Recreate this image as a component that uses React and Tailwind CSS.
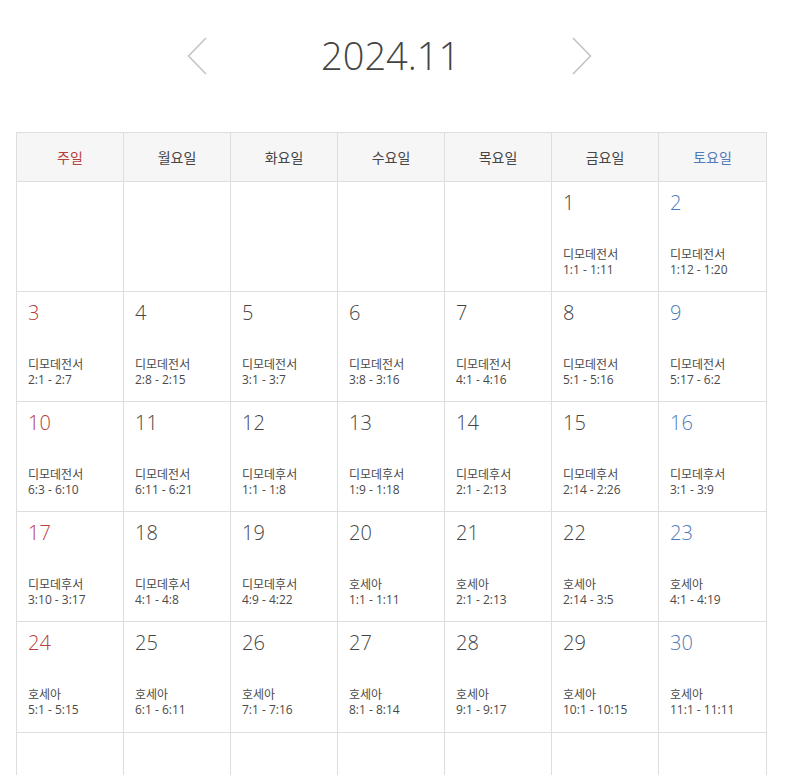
import React from "react";

const days = ["주일", "월요일", "화요일", "수요일", "목요일", "금요일", "토요일"];

const readings = {
  1: ["디모데전서", "1:1 - 1:11"],
  2: ["디모데전서", "1:12 - 1:20"],
  3: ["디모데전서", "2:1 - 2:7"],
  4: ["디모데전서", "2:8 - 2:15"],
  5: ["디모데전서", "3:1 - 3:7"],
  6: ["디모데전서", "3:8 - 3:16"],
  7: ["디모데전서", "4:1 - 4:16"],
  8: ["디모데전서", "5:1 - 5:16"],
  9: ["디모데전서", "5:17 - 6:2"],
  10: ["디모데전서", "6:3 - 6:10"],
  11: ["디모데전서", "6:11 - 6:21"],
  12: ["디모데후서", "1:1 - 1:8"],
  13: ["디모데후서", "1:9 - 1:18"],
  14: ["디모데후서", "2:1 - 2:13"],
  15: ["디모데후서", "2:14 - 2:26"],
  16: ["디모데후서", "3:1 - 3:9"],
  17: ["디모데후서", "3:10 - 3:17"],
  18: ["디모데후서", "4:1 - 4:8"],
  19: ["디모데후서", "4:9 - 4:22"],
  20: ["호세아", "1:1 - 1:11"],
  21: ["호세아", "2:1 - 2:13"],
  22: ["호세아", "2:14 - 3:5"],
  23: ["호세아", "4:1 - 4:19"],
  24: ["호세아", "5:1 - 5:15"],
  25: ["호세아", "6:1 - 6:11"],
  26: ["호세아", "7:1 - 7:16"],
  27: ["호세아", "8:1 - 8:14"],
  28: ["호세아", "9:1 - 9:17"],
  29: ["호세아", "10:1 - 10:15"],
  30: ["호세아", "11:1 - 11:11"],
};

const cells = [];
for (let i = 0; i < 5; i++) cells.push(null);
for (let d = 1; d <= 30; d++) cells.push(d);
for (let i = 0; i < 7; i++) cells.push(null);

const dayColor = (col) =>
  col === 0 ? "text-[#b5403f]" : col === 6 ? "text-[#4f7bb8]" : "text-[#444]";

const App = () => {
  return (
    <div
      className="w-[785px] h-[775px] overflow-hidden bg-white"
      style={{ fontFamily: '"Open Sans", "Noto Sans CJK KR", sans-serif' }}
    >
      <div className="flex items-center justify-center h-[112px] pb-[2px] gap-[114px] pr-[6px]">
        <svg width="20" height="38" viewBox="0 0 20 38" className="mt-[1px]">
          <path d="M19 1 L1.5 19 L19 37" fill="none" stroke="#c4c4c4" strokeWidth="1.6" />
        </svg>
        <div className="w-[137px] text-center text-[38px] font-light text-[#444] leading-none whitespace-nowrap">
          2024.11
        </div>
        <svg width="20" height="38" viewBox="0 0 20 38" className="mt-[1px]">
          <path d="M1 1 L18.5 19 L1 37" fill="none" stroke="#c4c4c4" strokeWidth="1.6" />
        </svg>
      </div>
      <div className="ml-[16px] mt-[20px] w-[751px] grid grid-cols-[repeat(6,106px)_107px] gap-px bg-[#dedede] p-px">
        {days.map((d, i) => (
          <div
            key={d}
            className={`h-[48px] bg-[#f6f6f6] flex items-center justify-center text-[14px] ${dayColor(i)}`}
            style={{ fontFamily: '"Noto Sans CJK KR", sans-serif' }}
          >
            {d}
          </div>
        ))}
        {cells.map((d, i) => {
          const col = i % 7;
          const row = Math.floor(i / 7);
          const r = d ? readings[d] : null;
          return (
            <div
              key={i}
              className={`${row === 4 ? "h-[110px]" : "h-[109px]"} bg-white px-[11px] pt-[9px]`}
            >
              {d && (
                <>
                  <div className={`text-[20px] font-light leading-[24px] ${dayColor(col)}`}>
                    {d}
                  </div>
                  <div
                    className="mt-[31px] text-[12px] leading-[16px] text-[#4a4a4a]"
                    style={{ fontFamily: '"Noto Sans CJK KR", sans-serif' }}
                  >
                    <div>{r[0]}</div>
                    <div style={{ fontFamily: '"Open Sans", sans-serif' }}>{r[1]}</div>
                  </div>
                </>
              )}
            </div>
          );
        })}
      </div>
    </div>
  );
};

export default App;
